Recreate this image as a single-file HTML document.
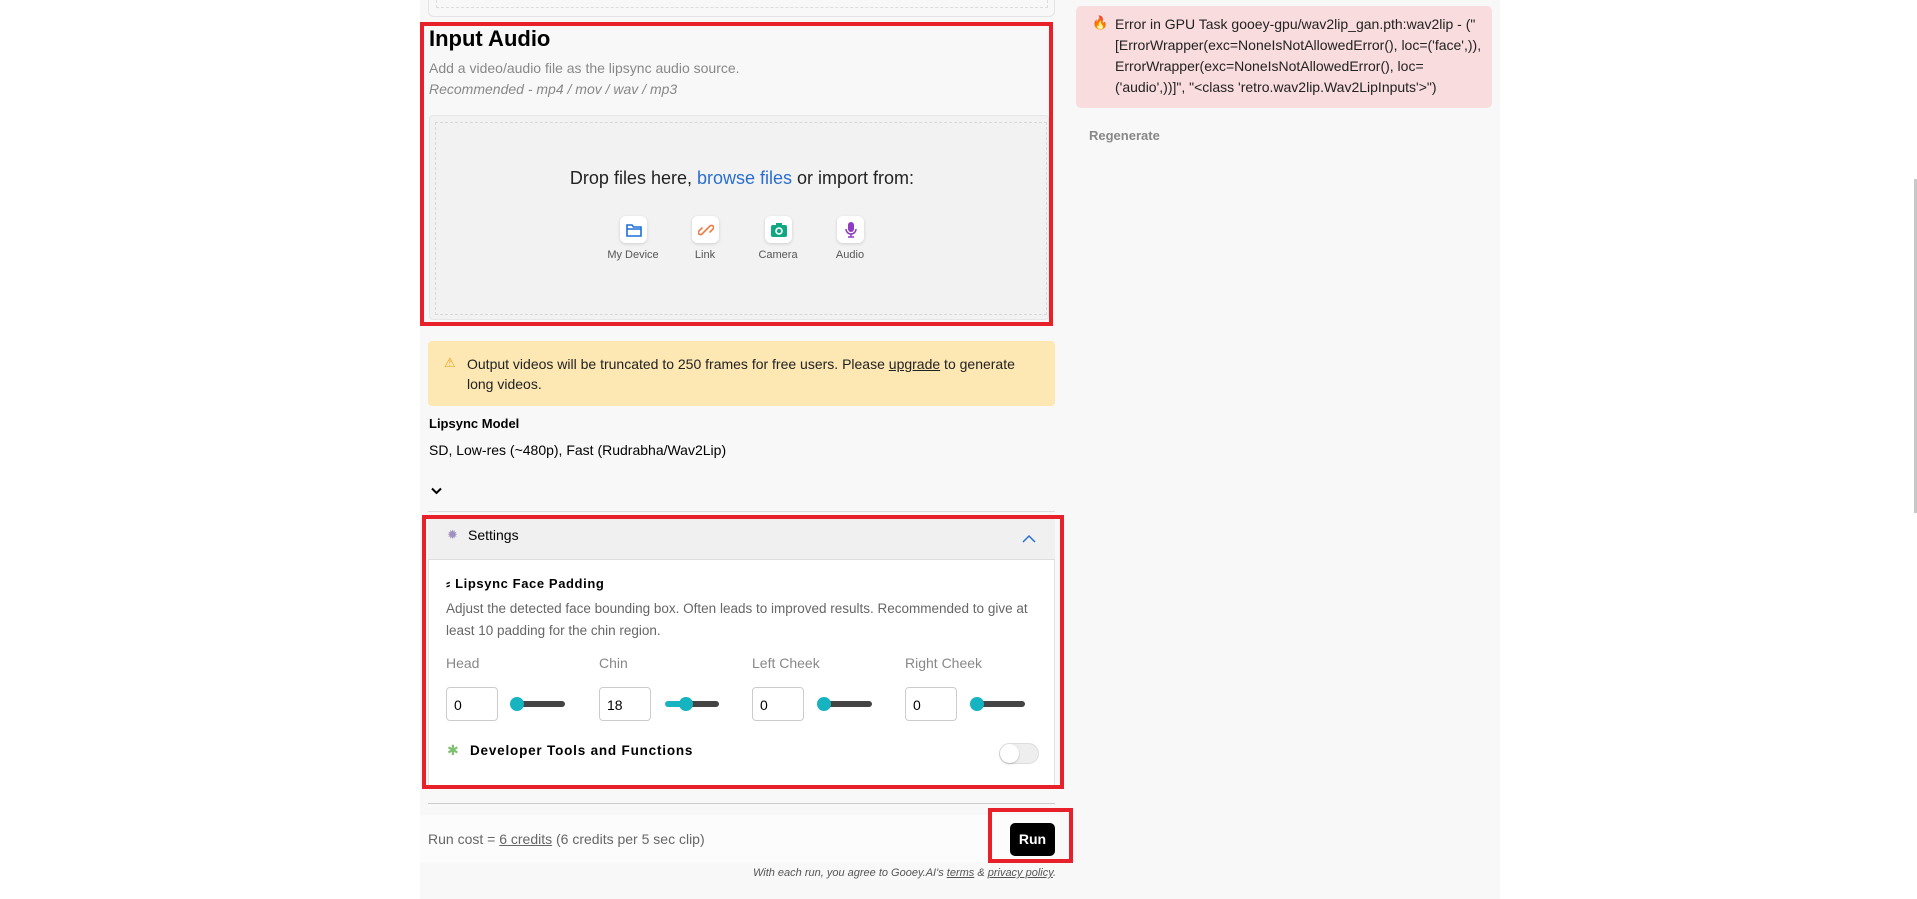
<!DOCTYPE html>
<html><head><meta charset="utf-8"><style>
*{box-sizing:border-box;margin:0;padding:0}
body{width:1917px;height:899px;overflow:hidden;background:#fff;font-family:"Liberation Sans",sans-serif;color:#000;position:relative}
.a{position:absolute}
.bg{left:420px;top:0;width:1080px;height:899px;background:#f8f8f8}
.red{border:4px solid #e8202a}
.t14{font-size:14px}
.ic{width:27px;height:27px;background:#fff;border-radius:6px;box-shadow:0 1px 3px rgba(0,0,0,.15);display:flex;align-items:center;justify-content:center}
.lbl{font-size:11px;color:#555;width:80px;text-align:center}
.inp{width:52px;height:34px;border:1px solid #ccc;border-radius:4px;background:#fff;font-size:14px;padding:9px 7px}
.sl{height:6px;border-radius:3px;background:#444;width:54px}
.kn{width:14px;height:14px;border-radius:50%;background:#16b3c0}
.cl{font-size:14px;color:#888}
</style></head><body>
<div class="a bg"></div>
<div class="a" style="left:428px;top:-10px;width:627px;height:27px;border:1px solid #e4e4e4;border-radius:6px"></div>
<div class="a" style="left:436px;top:-10px;width:612px;height:18px;border:1px dashed #ddd"></div>

<div class="a red" style="left:420px;top:22px;width:633px;height:304px"></div>
<div class="a" style="left:429px;top:26px;font-size:22px;font-weight:bold">Input Audio</div>
<div class="a" style="left:429px;top:60px;font-size:14px;color:#888">Add a video/audio file as the lipsync audio source.</div>
<div class="a" style="left:429px;top:81px;font-size:14px;color:#888;font-style:italic">Recommended - mp4 / mov / wav / mp3</div>
<div class="a" style="left:429px;top:115px;width:620px;height:205px;background:#f2f2f2;border:1px solid #e6e6e6;border-radius:4px"></div>
<div class="a" style="left:435px;top:122px;width:612px;height:193px;border:1px dashed #d8d8d8"></div>
<div class="a" style="left:429px;top:168px;width:626px;text-align:center;font-size:18px;color:#222">Drop files here, <span style="color:#2a6fd0">browse files</span> or import from:</div>
<div class="a ic" style="left:620px;top:216px"><svg width="16" height="14" viewBox="0 0 16 14"><path d="M1 2h5l1.5 2H15v9H1z M1 6h14" fill="none" stroke="#1f6fd8" stroke-width="1.6"/></svg></div>
<div class="a ic" style="left:692px;top:216px"><svg width="16" height="16" viewBox="0 0 16 16"><path d="M7 9l-3 3a2 2 0 0 1-3-3l3-3M9 7l3-3a2 2 0 0 1 3 3l-3 3M6 10l4-4" fill="none" stroke="#f07a45" stroke-width="1.6" stroke-linecap="round"/></svg></div>
<div class="a ic" style="left:765px;top:216px"><svg width="16" height="14" viewBox="0 0 16 14"><rect x="0" y="2" width="16" height="12" rx="2" fill="#0fa882"/><rect x="5" y="0" width="6" height="3" fill="#0fa882"/><circle cx="8" cy="8" r="3" fill="none" stroke="#fff" stroke-width="1.6"/></svg></div>
<div class="a ic" style="left:837px;top:216px"><svg width="12" height="16" viewBox="0 0 12 16"><rect x="3" y="0" width="6" height="10" rx="3" fill="#8e3cc0"/><path d="M1 7a5 5 0 0 0 10 0M6 12v3M3 15h6" fill="none" stroke="#8e3cc0" stroke-width="1.5"/></svg></div>
<div class="a lbl" style="left:593px;top:249px">My Device</div>
<div class="a lbl" style="left:665px;top:249px">Link</div>
<div class="a lbl" style="left:738px;top:249px">Camera</div>
<div class="a lbl" style="left:810px;top:249px">Audio</div>

<div class="a" style="left:428px;top:341px;width:627px;height:65px;background:#fde7b3;border-radius:4px"></div>
<div class="a" style="left:444px;top:355px;font-size:13px;color:#e8a020">⚠</div>
<div class="a t14" style="left:467px;top:354px;width:555px;line-height:20px;color:#222">Output videos will be truncated to 250 frames for free users. Please <u>upgrade</u> to generate long videos.</div>
<div class="a" style="left:429px;top:416px;font-size:13px;font-weight:bold">Lipsync Model</div>
<div class="a t14" style="left:429px;top:442px">SD, Low-res (~480p), Fast (Rudrabha/Wav2Lip)</div>
<div class="a" style="left:431px;top:482px"><svg width="11" height="8" viewBox="0 0 11 8"><path d="M1 1.5l4.5 4.5 4.5-4.5" fill="none" stroke="#000" stroke-width="2"/></svg></div>
<div class="a" style="left:428px;top:511px;width:627px;height:1px;background:#ddd"></div>

<div class="a" style="left:428px;top:516px;width:627px;height:272px;background:#fff;border:1px solid #e2e2e2"></div>
<div class="a" style="left:428px;top:516px;width:627px;height:44px;background:#f0f0f0;border-bottom:1px solid #ddd"></div>
<div class="a red" style="left:422px;top:515px;width:642px;height:274px"></div>
<div class="a" style="left:447px;top:527px;font-size:13px;color:#a090c0">✹</div>
<div class="a t14" style="left:468px;top:527px">Settings</div>
<div class="a" style="left:1022px;top:530px"><svg width="14" height="9" viewBox="0 0 14 9"><path d="M1 8l6-6 6 6" fill="none" stroke="#2a6fd0" stroke-width="1.5"/></svg></div>
<div class="a" style="left:446px;top:576px;font-size:13px;font-weight:bold;letter-spacing:.6px">⸗ Lipsync Face Padding</div>
<div class="a" style="left:446px;top:598px;width:585px;font-size:13.5px;line-height:22px;color:#666">Adjust the detected face bounding box. Often leads to improved results. Recommended to give at least 10 padding for the chin region.</div>
<div class="a cl" style="left:446px;top:655px">Head</div>
<div class="a cl" style="left:599px;top:655px">Chin</div>
<div class="a cl" style="left:752px;top:655px">Left Cheek</div>
<div class="a cl" style="left:905px;top:655px">Right Cheek</div>
<div class="a inp" style="left:446px;top:687px">0</div>
<div class="a inp" style="left:599px;top:687px">18</div>
<div class="a inp" style="left:752px;top:687px">0</div>
<div class="a inp" style="left:905px;top:687px">0</div>
<div class="a sl" style="left:511px;top:701px"></div><div class="a kn" style="left:510px;top:697px"></div>
<div class="a sl" style="left:665px;top:701px;background:linear-gradient(90deg,#16b3c0 40%,#444 40%)"></div><div class="a kn" style="left:679px;top:697px"></div>
<div class="a sl" style="left:818px;top:701px"></div><div class="a kn" style="left:817px;top:697px"></div>
<div class="a sl" style="left:971px;top:701px"></div><div class="a kn" style="left:970px;top:697px"></div>
<div class="a" style="left:447px;top:742px;font-size:14px;color:#7cc070">✱</div>
<div class="a" style="left:470px;top:743px;font-size:13.5px;font-weight:bold;letter-spacing:.8px">Developer Tools and Functions</div>
<div class="a" style="left:999px;top:743px;width:40px;height:21px;border-radius:11px;background:#eee;border:1px solid #ddd"></div>
<div class="a" style="left:1000px;top:744px;width:19px;height:19px;border-radius:50%;background:#fff;box-shadow:0 1px 2px rgba(0,0,0,.2)"></div>

<div class="a" style="left:428px;top:803px;width:627px;height:1px;background:#ccc"></div>
<div class="a" style="left:420px;top:815px;width:640px;height:48px;background:#fcfcfc"></div>
<div class="a t14" style="left:428px;top:831px;color:#666">Run cost = <u>6 credits</u> (6 credits per 5 sec clip)</div>
<div class="a red" style="left:988px;top:808px;width:85px;height:55px"></div>
<div class="a" style="left:1010px;top:823px;width:45px;height:33px;background:#000;border-radius:5px;color:#fff;font-weight:bold;font-size:14px;text-align:center;line-height:33px">Run</div>
<div class="a" style="left:600px;top:867px;width:456px;text-align:right;font-size:11px;font-style:italic;color:#555">With each run, you agree to Gooey.AI's <u>terms</u> &amp; <u>privacy policy</u>.</div>

<div class="a" style="left:1076px;top:6px;width:416px;height:102px;background:#f9dcdd;border-radius:5px"></div>
<div class="a" style="left:1092px;top:15px;font-size:13px">🔥</div>
<div class="a t14" style="left:1115px;top:14px;width:370px;line-height:21px;color:#222">Error in GPU Task gooey-gpu/wav2lip_gan.pth:wav2lip - ("[ErrorWrapper(exc=NoneIsNotAllowedError(), loc=('face',)), ErrorWrapper(exc=NoneIsNotAllowedError(), loc=('audio',))]", "&lt;class 'retro.wav2lip.Wav2LipInputs'&gt;")</div>
<div class="a" style="left:1089px;top:128px;font-size:13px;font-weight:bold;color:#888">Regenerate</div>
<div class="a" style="left:1914px;top:179px;width:3px;height:334px;background:#c8c8c8"></div>
</body></html>
